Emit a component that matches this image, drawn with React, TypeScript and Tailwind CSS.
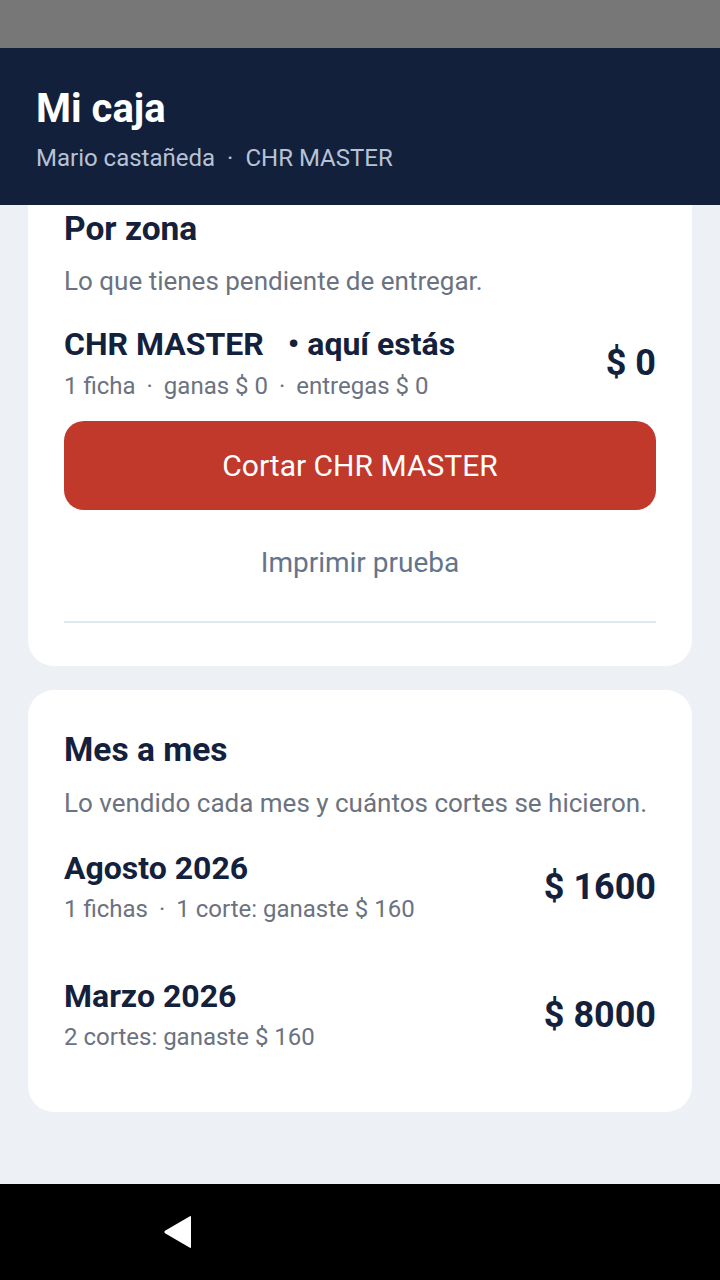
import React from "react";

const font = { fontFamily: "Roboto, 'Noto Sans', sans-serif" };

function Dot() {
  return <span className="mx-[11px]">·</span>;
}

interface MonthRowProps {
  title: string;
  detail: React.ReactNode;
  amount: string;
}

function MonthRow({ title, detail, amount }: MonthRowProps) {
  return (
    <div className="flex items-center justify-between">
      <div className="flex flex-col">
        <div className="text-[32px] leading-[40px] font-bold text-[#14213d]">{title}</div>
        <div className="mt-[5px] text-[24px] leading-[32px] text-[#6b7280]">{detail}</div>
      </div>
      <div className="text-[36px] leading-[44px] font-bold text-[#14213d]">{amount}</div>
    </div>
  );
}

export default function App() {
  return (
    <div className="flex h-[1280px] w-[720px] flex-col overflow-hidden bg-[#edf0f5]" style={font}>
      {/* barra de estado */}
      <div className="h-12 shrink-0 bg-[#777777]" />

      {/* encabezado */}
      <header className="h-[157px] shrink-0 bg-[#13203b] px-9 pt-[37px]">
        <h1 className="text-[40px] leading-[48px] font-bold text-white">Mi caja</h1>
        <div className="mt-[9px] text-[24px] leading-[32px] text-[#b7c2d6]">
          Mario castañeda
          <span className="mx-3">·</span>
          CHR MASTER
        </div>
      </header>

      <main className="flex flex-1 flex-col gap-6 overflow-hidden px-7">
        {/* Por zona (desplazada, el borde de arriba queda oculto) */}
        <section className="rounded-b-[26px] bg-white px-9 pt-1 pb-[43px]">
          <h2 className="text-[33.5px] leading-[40px] font-bold text-[#14213d]">Por zona</h2>
          <p className="mt-[14px] text-[26px] leading-[36px] text-[#6b7280]">
            Lo que tienes pendiente de entregar.
          </p>

          <div className="mt-[25px] flex items-center justify-between">
            <div className="flex flex-col">
              <div className="text-[32px] leading-[40px] font-bold text-[#14213d]">
                CHR MASTER<span className="ml-6">• aquí estás</span>
              </div>
              <div className="mt-[6px] text-[24px] leading-[32px] text-[#6b7280]">
                1 ficha
                <Dot />
                ganas $ 0
                <Dot />
                entregas $ 0
              </div>
            </div>
            <div className="text-[36px] leading-[44px] font-bold text-[#14213d]">$ 0</div>
          </div>

          <button className="mt-[19px] flex h-[89px] w-full items-center justify-center rounded-[20px] bg-[#c0392b] text-[30px] text-white">
            Cortar CHR MASTER
          </button>

          <button className="mt-[33px] block w-full text-center text-[28px] leading-[40px] text-[#64748b]">
            Imprimir prueba
          </button>

          <div className="mt-[38px] h-[2px] bg-[#e2e8f0]" />
        </section>

        {/* Mes a mes */}
        <section className="rounded-[26px] bg-white px-9 pt-10 pb-[59px]">
          <h2 className="text-[33.5px] leading-[40px] font-bold text-[#14213d]">Mes a mes</h2>
          <p className="mt-[15px] text-[26px] leading-[36px] text-[#6b7280]">
            Lo vendido cada mes y cuántos cortes se hicieron.
          </p>
          <div className="mt-[27px] flex flex-col gap-[51px]">
            <MonthRow
              title="Agosto 2026"
              detail={
                <>
                  1 fichas
                  <Dot />
                  1 corte: ganaste $ 160
                </>
              }
              amount="$ 1600"
            />
            <MonthRow title="Marzo 2026" detail="2 cortes: ganaste $ 160" amount="$ 8000" />
          </div>
        </section>
      </main>

      {/* barra de navegación */}
      <nav className="flex h-24 shrink-0 items-center bg-black pl-[163px]">
        <svg width="30" height="34" viewBox="0 0 30 34">
          <path d="M28 2 L28 32 Q28 33.5 26.5 32.5 L2 18.2 Q0.5 17 2 15.8 L26.5 1.5 Q28 0.5 28 2 Z" fill="white" />
        </svg>
      </nav>
    </div>
  );
}
